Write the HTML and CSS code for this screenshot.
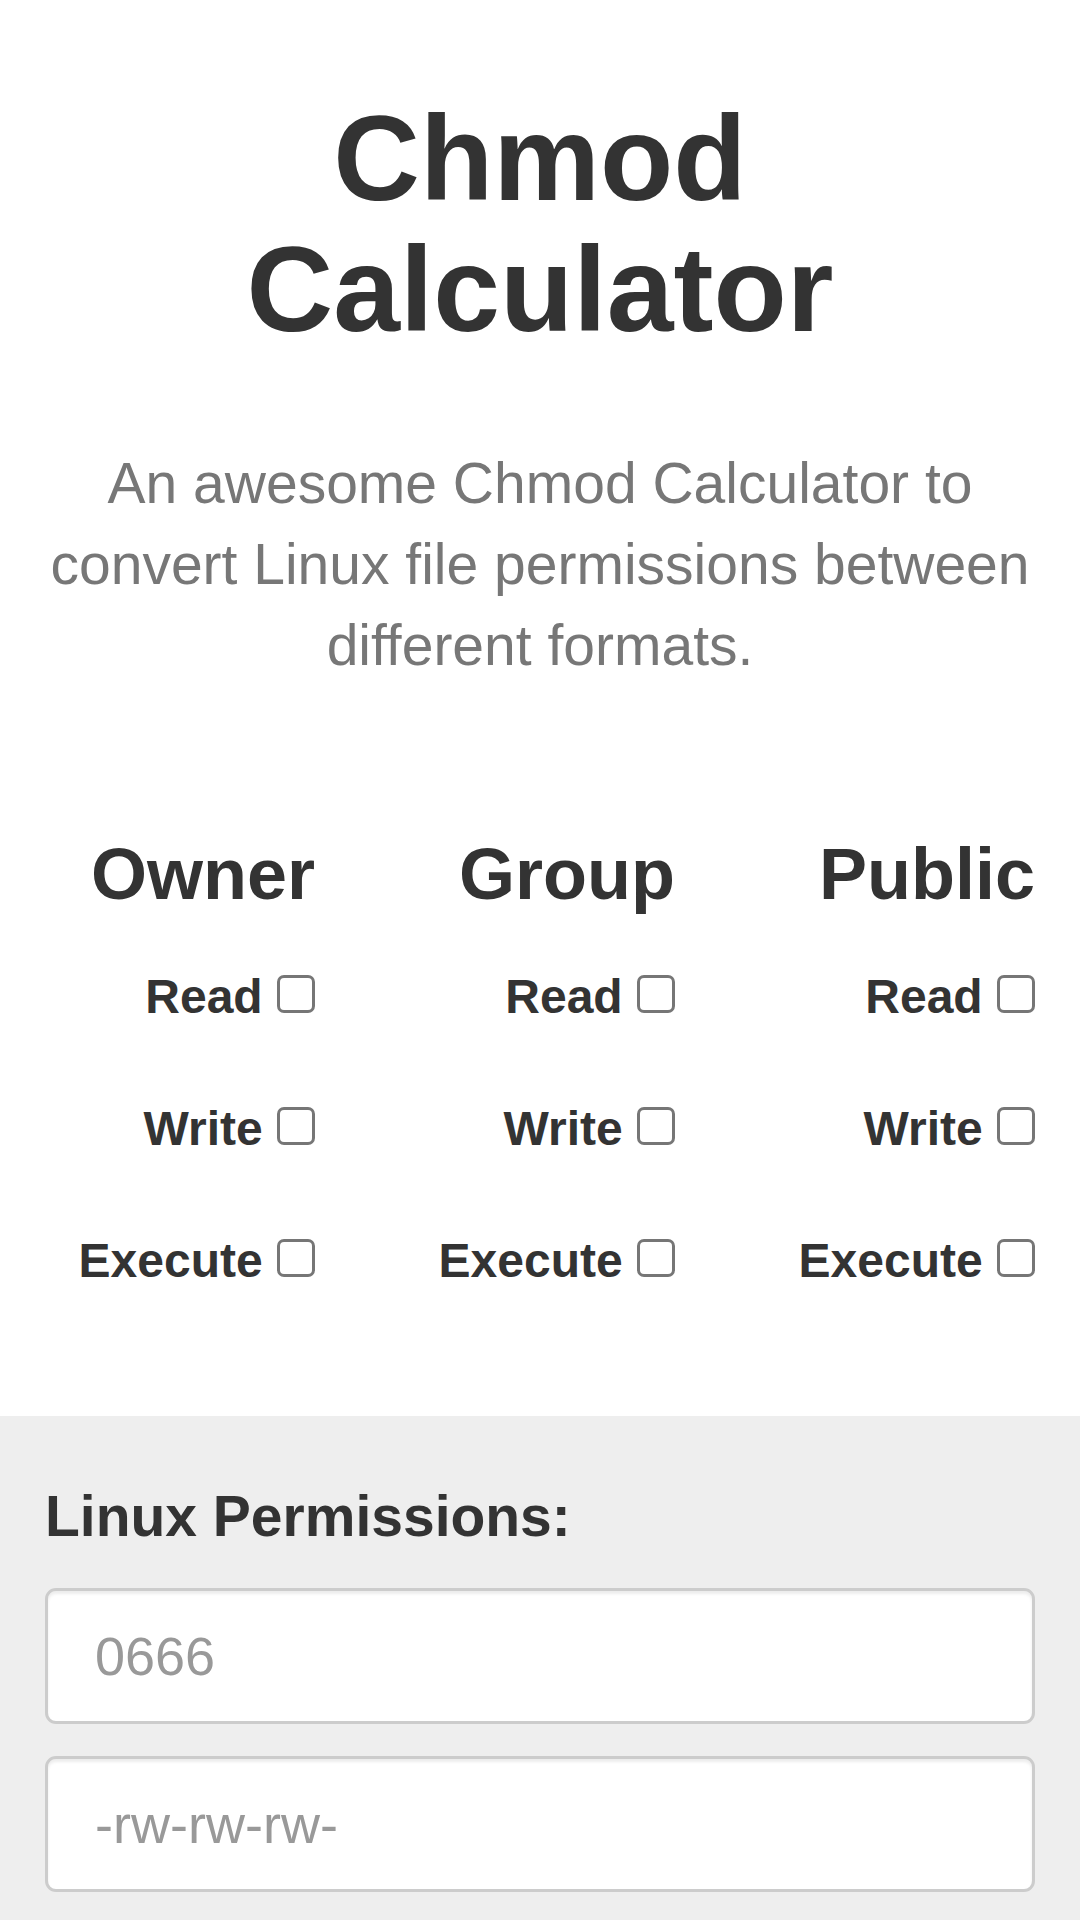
FILE: index.html
```html
<!DOCTYPE html>
<html lang="en">
<head>
<meta charset="utf-8">
<title>Chmod Calculator</title>
<link rel="stylesheet" href="styles.css">
</head>
<body>
<header class="hero">
  <h1 class="title">Chmod<br>Calculator</h1>
  <p class="lead">An awesome Chmod Calculator to convert Linux file permissions between different formats.</p>
</header>
<section class="perms">
  <div class="col">
    <h2 class="col-title">Owner</h2>
    <label class="check">Read <span class="box"></span></label>
    <label class="check">Write <span class="box"></span></label>
    <label class="check">Execute <span class="box"></span></label>
  </div>
  <div class="col">
    <h2 class="col-title">Group</h2>
    <label class="check">Read <span class="box"></span></label>
    <label class="check">Write <span class="box"></span></label>
    <label class="check">Execute <span class="box"></span></label>
  </div>
  <div class="col">
    <h2 class="col-title">Public</h2>
    <label class="check">Read <span class="box"></span></label>
    <label class="check">Write <span class="box"></span></label>
    <label class="check">Execute <span class="box"></span></label>
  </div>
</section>
<section class="output">
  <h3 class="out-label">Linux Permissions:</h3>
  <input class="field" type="text" placeholder="0666">
  <input class="field" type="text" placeholder="-rw-rw-rw-">
</section>
</body>
</html>
```
FILE: styles.css
```css
* { box-sizing: border-box; }
html, body {
  margin: 0;
  padding: 0;
  background: #fff;
  font-family: "Liberation Sans", Arial, sans-serif;
  color: #333;
}
.hero {
  padding: 93px 40px 0;
  text-align: center;
}
.title {
  margin: 0;
  font-size: 120px;
  line-height: 131px;
  font-weight: bold;
  color: #333;
}
.lead {
  margin: 88px 0 0;
  font-size: 57px;
  line-height: 81px;
  color: #777;
}
.perms {
  display: grid;
  grid-template-columns: repeat(3, 1fr);
  margin-top: 149px;
  padding-bottom: 127px;
}
.col {
  display: flex;
  flex-direction: column;
  align-items: flex-end;
  padding: 0 45px;
}
.col-title {
  margin: 0 0 55px;
  font-size: 72px;
  line-height: 79px;
  font-weight: bold;
  color: #333;
}
.check {
  display: block;
  font-size: 48px;
  line-height: 56px;
  font-weight: bold;
  color: #333;
  margin-bottom: 76px;
  white-space: nowrap;
}
.check:last-child { margin-bottom: 0; }
.box {
  display: inline-block;
  width: 38px;
  height: 38px;
  margin-left: 1px;
  border: 3px solid #767676;
  border-radius: 7px;
  background: #fff;
  vertical-align: baseline;
}
.output {
  background: #eee;
  padding: 69px 45px 40px;
}
.out-label {
  margin: 0 0 41px;
  font-size: 57px;
  line-height: 62px;
  font-weight: bold;
  color: #333;
}
.field {
  display: block;
  width: 100%;
  height: 136px;
  margin: 0 0 32px;
  padding: 0 47px;
  border: 3px solid #ccc;
  border-radius: 11px;
  background: #fff;
  box-shadow: inset 0 3px 3px rgba(0,0,0,0.075);
  font-family: "Liberation Sans", Arial, sans-serif;
  font-size: 54px;
  color: #555;
  outline: none;
}
.field::placeholder { color: #999; }
```
